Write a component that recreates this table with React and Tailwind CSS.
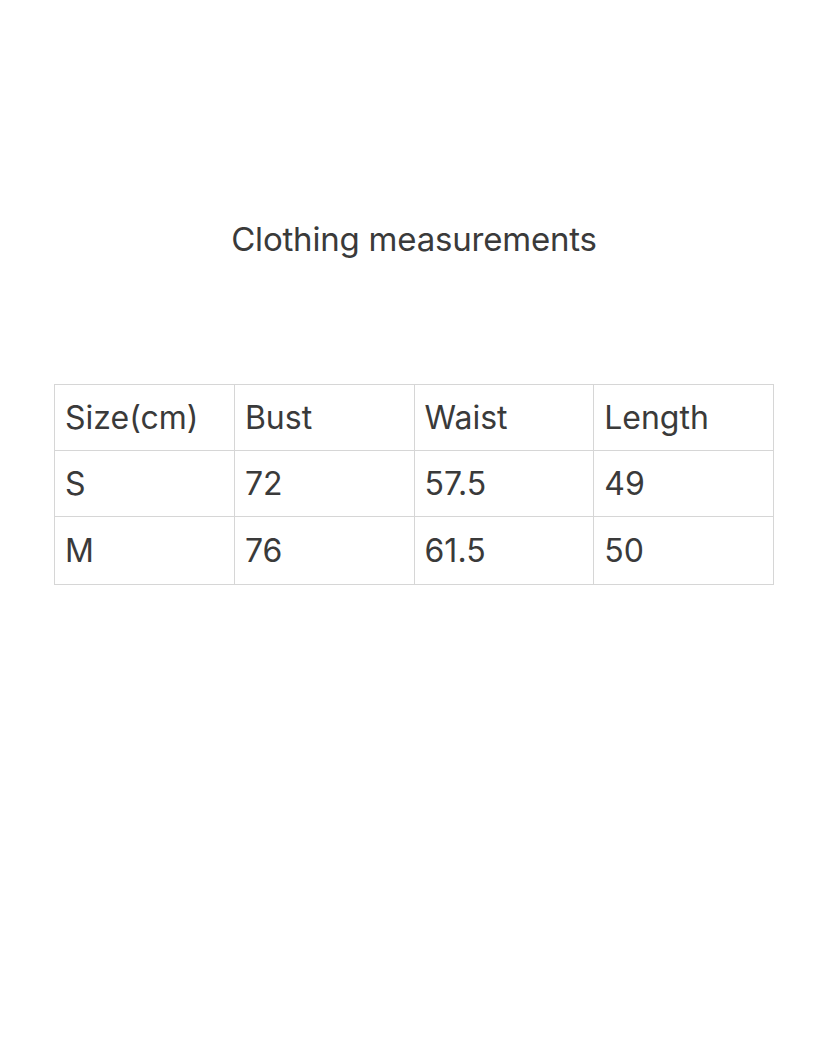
import React from 'react';

const rows = [
  ['Size(cm)', 'Bust', 'Waist', 'Length'],
  ['S', '72', '57.5', '49'],
  ['M', '76', '61.5', '50'],
];

export default function App() {
  return (
    <div className="w-[828px] h-[1042px] bg-white text-[#3a3a3a]" style={{ fontFamily: 'Inter, "Liberation Sans", sans-serif' }}>
      <h1 className="pt-[216px] text-center text-[33px] leading-[46px] font-normal tracking-[-0.2px]">
        Clothing measurements
      </h1>
      <table className="mt-[122px] ml-[54px] w-[720px] border-collapse">
        <tbody>
          {rows.map((row, i) => (
            <tr key={i} className={i === 2 ? 'h-[68px]' : 'h-[66px]'}>
              {row.map((cell, j) => (
                <td key={j} className="w-[180px] border border-[#d6d6d6] pl-[10px] text-[32px] leading-none align-middle">
                  {cell}
                </td>
              ))}
            </tr>
          ))}
        </tbody>
      </table>
    </div>
  );
}
